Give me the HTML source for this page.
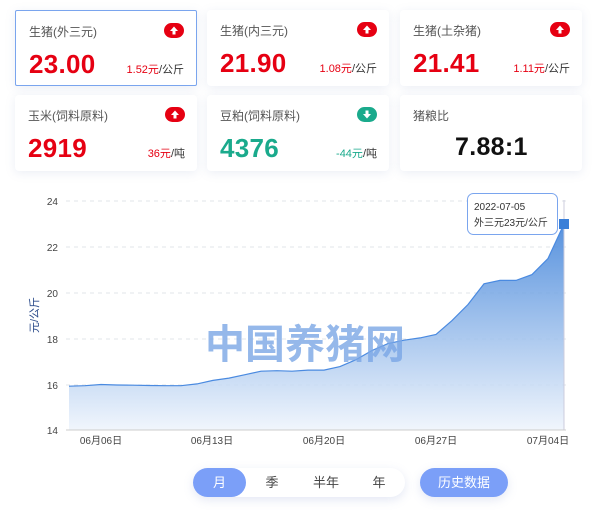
<!DOCTYPE html>
<html><head><meta charset="utf-8"><style>
*{margin:0;padding:0;box-sizing:border-box}
body{width:600px;height:520px;background:#fff;font-family:"Liberation Sans","Noto Sans CJK SC",sans-serif;position:relative;overflow:hidden}
.card{position:absolute;width:182px;height:76px;background:#fff;border-radius:4px;box-shadow:0 2px 10px rgba(120,140,190,.15)}
.card.sel{border:1px solid #7aa5ee;border-radius:2px}
.t{position:absolute;left:13px;top:12px;font-size:12px;color:#555}
.v{position:absolute;left:13px;top:38px;font-size:26px;font-weight:bold;color:#e60012;letter-spacing:.3px}
.d{position:absolute;right:12px;top:50px;font-size:11px;color:#e60012}
.d b{font-weight:normal;color:#333}
.ic{position:absolute;right:12px;top:12px;width:20px;height:15px;border-radius:8px;background:#e60012}
.ic.g{background:#1aaa8c}
.g1{color:#1aaa8c}
.seg{position:absolute;top:0;height:29px;line-height:29px;text-align:center}
</style></head><body>
<div class="card sel" style="left:15px;top:10px"><div class="t">生猪(外三元)</div><div class="ic"><svg width="20" height="15"><path d="M10 3.5 L14 8 H11.5 V11.5 H8.5 V8 H6 Z" fill="#fff"/></svg></div><div class="v">23.00</div><div class="d">1.52元<b>/公斤</b></div></div>
<div class="card" style="left:207px;top:10px"><div class="t">生猪(内三元)</div><div class="ic"><svg width="20" height="15"><path d="M10 3.5 L14 8 H11.5 V11.5 H8.5 V8 H6 Z" fill="#fff"/></svg></div><div class="v">21.90</div><div class="d">1.08元<b>/公斤</b></div></div>
<div class="card" style="left:400px;top:10px"><div class="t">生猪(土杂猪)</div><div class="ic"><svg width="20" height="15"><path d="M10 3.5 L14 8 H11.5 V11.5 H8.5 V8 H6 Z" fill="#fff"/></svg></div><div class="v">21.41</div><div class="d">1.11元<b>/公斤</b></div></div>
<div class="card" style="left:15px;top:95px"><div class="t">玉米(饲料原料)</div><div class="ic"><svg width="20" height="15"><path d="M10 3.5 L14 8 H11.5 V11.5 H8.5 V8 H6 Z" fill="#fff"/></svg></div><div class="v">2919</div><div class="d">36元<b>/吨</b></div></div>
<div class="card" style="left:207px;top:95px"><div class="t">豆粕(饲料原料)</div><div class="ic g"><svg width="20" height="15"><path d="M10 11.5 L14 7 H11.5 V3.5 H8.5 V7 H6 Z" fill="#fff"/></svg></div><div class="v g1">4376</div><div class="d g1">-44元<b>/吨</b></div></div>
<div class="card" style="left:400px;top:95px"><div class="t">猪粮比</div><div class="v" style="color:#111;left:55px;font-size:25px">7.88:1</div></div>

<svg style="position:absolute;left:0;top:185px" width="600" height="275" viewBox="0 185 600 275">
<defs><linearGradient id="gr" x1="0" y1="0" x2="0" y2="1"><stop offset="0" stop-color="#3a7fd8"/><stop offset="1" stop-color="#eef4fc"/></linearGradient></defs>
<g stroke="#e2e4ea" stroke-dasharray="4 4" stroke-width="1">
<line x1="66" y1="201" x2="566" y2="201"/><line x1="66" y1="247" x2="566" y2="247"/><line x1="66" y1="293" x2="566" y2="293"/><line x1="66" y1="339" x2="566" y2="339"/><line x1="66" y1="385" x2="566" y2="385"/><line x1="66" y1="430" x2="566" y2="430"/>
</g>
<g font-size="10" fill="#444" text-anchor="end"><text x="58" y="205">24</text><text x="58" y="251">22</text><text x="58" y="297">20</text><text x="58" y="343">18</text><text x="58" y="389">16</text><text x="58" y="434">14</text></g>
<text transform="translate(38,315) rotate(-90)" font-size="11" fill="#2a4a8a" text-anchor="middle">元/公斤</text>
<path d="M69 386.2 L85 385.7 L101 384.5 L117 385 L133 385.2 L149 385.5 L165 385.7 L181 385.7 L197 383.9 L213 380.4 L229 378.1 L245 374.7 L261 371.2 L277 370.7 L292 371.2 L308 370.1 L324 370.1 L340 366.6 L356 359.7 L372 350.5 L388 343.6 L404 340.2 L420 337.9 L436 334.4 L452 320.6 L468 304.5 L484 283.8 L500 280.4 L516 280.4 L532 274.6 L548 258.5 L564 224 L564 430 L69 430 Z" fill="url(#gr)" opacity=".85"/>
<path d="M69 386.2 L85 385.7 L101 384.5 L117 385 L133 385.2 L149 385.5 L165 385.7 L181 385.7 L197 383.9 L213 380.4 L229 378.1 L245 374.7 L261 371.2 L277 370.7 L292 371.2 L308 370.1 L324 370.1 L340 366.6 L356 359.7 L372 350.5 L388 343.6 L404 340.2 L420 337.9 L436 334.4 L452 320.6 L468 304.5 L484 283.8 L500 280.4 L516 280.4 L532 274.6 L548 258.5 L564 224" fill="none" stroke="#4a8ae0" stroke-width="1.2"/>
<line x1="564" y1="200" x2="564" y2="430" stroke="#ccd" stroke-width="1"/>
<line x1="66" y1="430" x2="566" y2="430" stroke="#ccc"/>
<text x="305" y="358" font-size="40" font-weight="bold" fill="#7ba7e6" opacity=".8" text-anchor="middle" font-family="Noto Sans CJK SC,sans-serif">中国养猪网</text>
<g font-size="10" fill="#444" text-anchor="middle"><text x="101" y="444">06月06日</text><text x="212" y="444">06月13日</text><text x="324" y="444">06月20日</text><text x="436" y="444">06月27日</text><text x="548" y="444">07月04日</text></g>
<rect x="559" y="219" width="10" height="10" fill="#3a7fd8"/>
<rect x="467.5" y="193.5" width="90" height="41" rx="6" fill="#fff" stroke="#7aa5ee"/>
<text x="474" y="210" font-size="10" fill="#333">2022-07-05</text>
<text x="474" y="226" font-size="10" fill="#333">外三元23元/公斤</text>
</svg>

<div style="position:absolute;left:193px;top:468px;width:212px;height:29px;border-radius:15px;background:#fff;box-shadow:0 3px 10px rgba(120,140,200,.2);font-size:13px;color:#444">
<div class="seg" style="left:0;width:53px;border-radius:15px;background:#7b9ff8;color:#fff">月</div>
<div class="seg" style="left:66px;width:26px">季</div><div class="seg" style="left:117px;width:32px">半年</div><div class="seg" style="left:173px;width:26px">年</div></div>
<div style="position:absolute;left:420px;top:468px;width:88px;height:29px;border-radius:15px;background:#7b9ff8;color:#fff;font-size:13px;text-align:center;line-height:29px;box-shadow:0 3px 10px rgba(120,140,200,.2)">历史数据</div>
</body></html>
